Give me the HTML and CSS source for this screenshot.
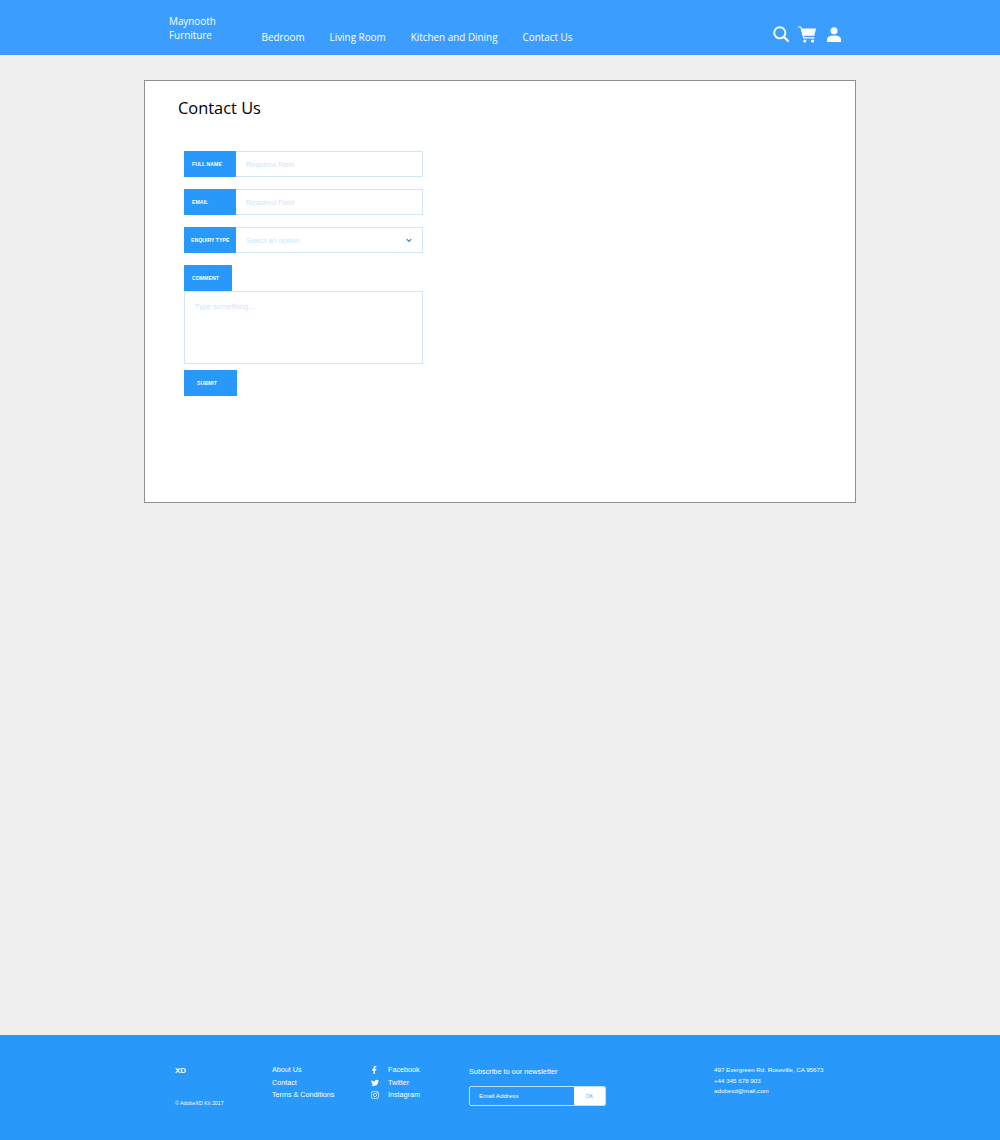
FILE: index.html
```html
<!DOCTYPE html>
<html lang="en">
<head>
    <meta charset="UTF-8">
    <meta name="viewport" content="width=device-width, initial-scale=1.0">
    <title>Contact Us</title>
    <link rel="stylesheet" href="styles.css">
</head>
<body>
    <div class="header">
        <div class="brand">Maynooth<br>Furniture</div>
        <div class="nav">
            <a>Bedroom</a>
            <a>Living Room</a>
            <a>Kitchen and Dining</a>
            <a>Contact Us</a>
        </div>
        <div class="header-icons">
            <svg class="icon-search" viewBox="0 0 16 16" fill="none" stroke="#fff">
                <circle cx="6.8" cy="6.8" r="5.6" stroke-width="1.9"/>
                <path d="M10.8 10.8 15 15" stroke-width="2.2" stroke-linecap="round"/>
            </svg>
            <svg class="icon-cart" viewBox="0 0 18 17" fill="#fff">
                <path d="M0 .4h3.2l.8 2h14l-1.700 7.300H6l.4 1.600h10.200v1.200H5.200L2.400 1.600H0z"/>
                <circle cx="6.800" cy="15" r="1.600"/>
                <circle cx="14.600" cy="15" r="1.600"/>
            </svg>
            <svg class="icon-user" viewBox="0 0 14 15" fill="#fff">
                <circle cx="7" cy="3.700" r="3.500"/>
                <path d="M0 15v-2.400C0 9.800 3 8.500 7 8.500s7 1.300 7 4.100V15z"/>
            </svg>
        </div>
    </div>

    <div class="main">
        <div class="card">
            <h1>Contact Us</h1>
            <div class="form">
                <div class="field">
                    <div class="label">FULL NAME</div>
                    <div class="input">Required Field</div>
                </div>
                <div class="field">
                    <div class="label">EMAIL</div>
                    <div class="input">Required Field</div>
                </div>
                <div class="field">
                    <div class="label label-tight">ENQUIRY TYPE</div>
                    <div class="input select">
                        Select an option
                        <svg class="chevron" viewBox="0 0 8 6" fill="none" stroke="#2a7fb8" stroke-width="1.500">
                            <path d="M1 1.300 4 4.300 7 1.300"/>
                        </svg>
                    </div>
                </div>
                <div class="label label-comment">COMMENT</div>
                <div class="textarea">Type something...</div>
                <div class="submit">SUBMIT</div>
            </div>
        </div>
    </div>

    <div class="footer">
        <div class="foot-brand">
            <div class="xd">XD</div>
            <div class="copy">© AdobeXD Kit 2017</div>
        </div>
        <div class="foot-links">
            <div>About Us</div>
            <div>Contact</div>
            <div>Terms &amp; Conditions</div>
        </div>
        <div class="foot-social">
            <div>
                <svg viewBox="0 0 10 10" fill="#fff"><path d="M4.900 10V5.500h1.500l.3-1.800H4.900V2.700c0-.5.200-.9.900-.9h.9V.2C6.500.1 6 0 5.400 0 4 0 3.100.8 3.100 2.400v1.300H1.500v1.800h1.600V10z"/></svg>
                Facebook
            </div>
            <div>
                <svg viewBox="0 0 10 10" fill="#fff"><path d="M10 2c-.4.200-.8.300-1.200.3.400-.2.800-.6.900-1.100-.4.200-.8.400-1.300.5C8 1.300 7.500 1 6.900 1 5.700 1 4.800 2 5 3.200 3.300 3.100 1.800 2.300.7 1.100.2 2 .4 3.200 1.300 3.800c-.3 0-.6-.1-.9-.2 0 .9.700 1.800 1.600 2-.3.100-.6.100-.9 0 .2.800 1 1.400 1.900 1.400C2.200 7.700 1.100 8 0 7.900 3.700 10.200 9.300 8.200 9 3c.4-.3.800-.6 1-1z"/></svg>
                Twitter
            </div>
            <div>
                <svg viewBox="0 0 10 10" fill="none" stroke="#fff" stroke-width=".9">
                    <rect x=".5" y=".5" width="9" height="9" rx="2.500"/>
                    <circle cx="5" cy="5" r="2.100"/>
                    <circle cx="7.600" cy="2.400" r=".3"/>
                </svg>
                Instagram
            </div>
        </div>
        <div class="foot-news">
            <div class="news-title">Subscribe to our newsletter</div>
            <div class="news-box">
                <div class="news-input">Email Address</div>
                <div class="news-ok">OK</div>
            </div>
        </div>
        <div class="foot-address">
            <div>497 Evergreen Rd. Roseville, CA 95673</div>
            <div>+44 345 678 903</div>
            <div>adobexd@mail.com</div>
        </div>
    </div>
</body>
</html>
```

FILE: styles.css
```css
body {
    font-family: "Liberation Sans", Arial, sans-serif;
    margin: 0;
    padding: 0;
    background-color: #efefef;
    height: 1140px;
    display: flex;
    flex-direction: column;
}
.header {
    height: 55px;
    box-sizing: border-box;
    background-color: #3b9eff;
    color: #fff;
    font-family: "Open Sans", sans-serif;
    display: flex;
    padding: 14px 159px 0 169px;
}
.brand {
    width: 92.5px;
    font-size: 9.9px;
    line-height: 14px;
}
.nav {
    display: flex;
    gap: 25px;
    font-size: 9.9px;
    line-height: 17px;
    padding-top: 15px;
}
.header-icons {
    display: flex;
    align-items: flex-start;
    margin-left: auto;
}
.header-icons svg {
    display: block;
}
.icon-search {
    width: 16px;
    height: 16px;
    margin-top: 12px;
}
.icon-cart {
    width: 18px;
    height: 17px;
    margin: 12px 0 0 9px;
}
.icon-user {
    width: 14px;
    height: 15px;
    margin: 13px 0 0 11px;
}
.main {
    flex: 1;
    padding: 25px 144px 0;
}
.card {
    height: 423px;
    box-sizing: border-box;
    background-color: #fff;
    border: 1px solid #8f8f8f;
    padding: 15px 33px;
}
.card h1 {
    margin: 0 0 31px;
    font-family: "Open Sans", sans-serif;
    font-weight: 400;
    font-size: 16.4px;
    line-height: 24px;
    color: #000;
}
.form {
    width: 239px;
    margin-left: 6px;
}
.field {
    display: flex;
    height: 26px;
    margin-bottom: 12px;
}
.label {
    width: 52px;
    flex-shrink: 0;
    box-sizing: border-box;
    background-color: #2898fb;
    color: #fff;
    font-size: 5.2px;
    font-weight: 700;
    line-height: 26px;
    padding-left: 8px;
}
.label-tight {
    padding-left: 7px;
    white-space: nowrap;
}
.label-comment {
    width: 48px;
    height: 26px;
}
.input {
    flex: 1;
    box-sizing: border-box;
    border: 1px solid #d0e7f3;
    border-left: none;
    color: #cfe4f4;
    font-size: 7.4px;
    line-height: 25px;
    padding-left: 10px;
}
.select {
    display: flex;
    justify-content: space-between;
    align-items: center;
    padding-right: 10px;
}
.chevron {
    width: 6px;
    height: 5px;
}
.textarea {
    height: 73px;
    box-sizing: border-box;
    border: 1px solid #d0e7f3;
    color: #cfe4f4;
    font-size: 7.5px;
    line-height: 9px;
    padding: 10px 10px;
}
.submit {
    width: 53px;
    height: 26px;
    margin-top: 6px;
    background-color: #2898fb;
    color: #fff;
    font-size: 5.2px;
    font-weight: 700;
    line-height: 26px;
    padding-left: 13px;
    box-sizing: border-box;
}
.footer {
    height: 105px;
    box-sizing: border-box;
    background-color: #2898fb;
    color: #fff;
    display: flex;
    padding: 30px 0 0 175px;
    font-size: 7.2px;
}
.foot-brand {
    width: 97px;
}
.xd {
    font-size: 8px;
    font-weight: 700;
    line-height: 11px;
}
.copy {
    margin-top: 24px;
    font-size: 5.3px;
    line-height: 7px;
}
.foot-links {
    width: 99px;
    line-height: 12.5px;
    margin-top: -1px;
}
.foot-social {
    width: 98px;
    line-height: 12.5px;
    margin-top: -1px;
}
.foot-social div {
    display: flex;
    align-items: center;
    gap: 9px;
}
.foot-social svg {
    width: 8px;
    height: 8px;
    flex-shrink: 0;
}
.news-title {
    font-size: 7.3px;
    line-height: 11px;
    padding-top: 1px;
}
.news-box {
    display: flex;
    width: 137px;
    height: 20px;
    box-sizing: border-box;
    margin-top: 9px;
    border: 1px solid #bfe0fd;
    border-radius: 2px;
    overflow: hidden;
    font-size: 6.2px;
    line-height: 18px;
}
.news-input {
    flex: 1;
    padding-left: 9px;
}
.news-ok {
    width: 31px;
    background-color: #fff;
    color: #6aa9dc;
    font-size: 5.2px;
    text-align: center;
}
.foot-news {
    width: 245px;
}
.foot-address {
    font-size: 6.2px;
    line-height: 10.5px;
}
```
